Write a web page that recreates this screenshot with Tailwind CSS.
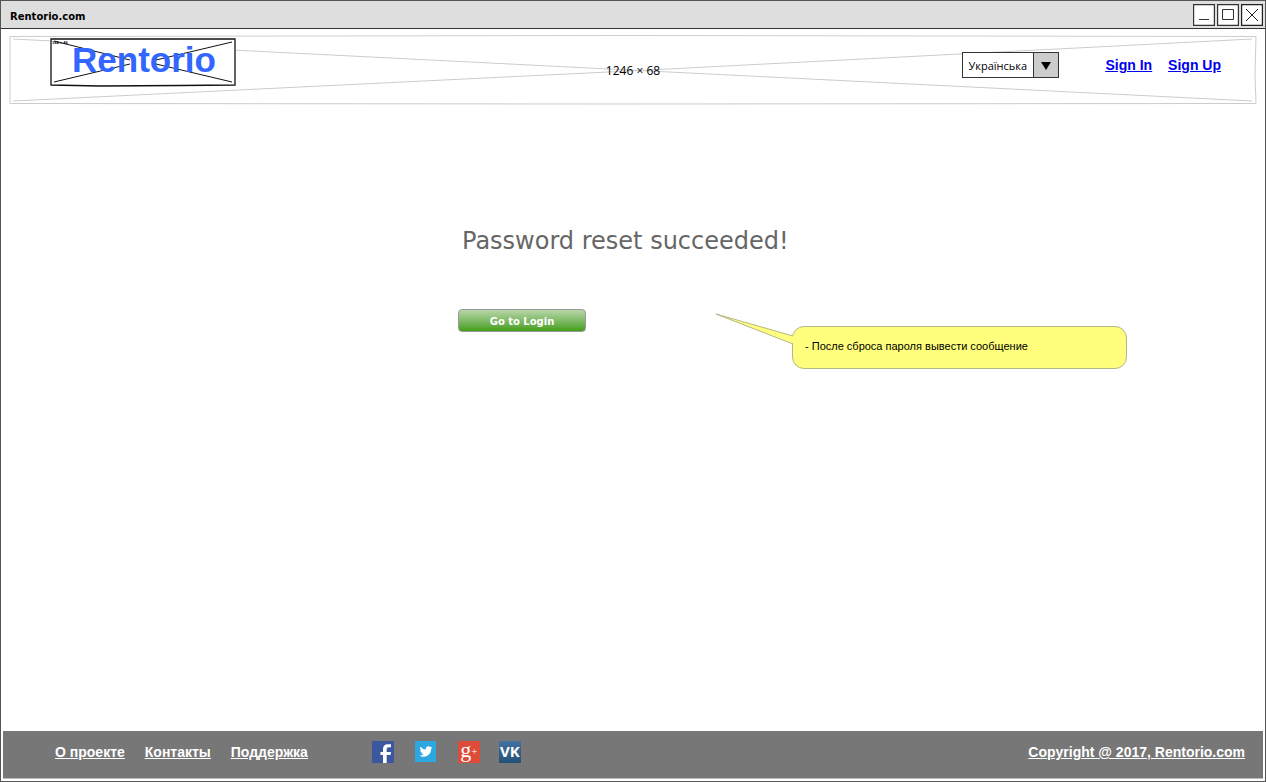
<!DOCTYPE html>
<html lang="uk">
<head>
<meta charset="utf-8">
<title>Rentorio.com</title>
<script src="https://cdn.jsdelivr.net/npm/@tailwindcss/browser@4"></script>
</head>
<body class="flex min-h-screen flex-col border border-[#555] bg-white font-['Liberation_Sans',sans-serif] text-black">
  <div class="flex h-7 items-center justify-between border-b border-[#333] bg-[#dedede] pr-[2px] pl-[9px]">
    <span class="pt-[3px] font-['DejaVu_Sans',sans-serif] text-[10px] font-bold">Rentorio.com</span>
    <div class="flex gap-[2px]">
      <button aria-label="Minimize" class="size-[22px]"><svg class="block" width="22" height="22" viewBox="0 0 22 22" fill="#fff" stroke="#333"><path stroke-width="1.200" d="M.6.6h20.800v20.800H.6z"/><path d="M6 15.500h10"/></svg></button>
      <button aria-label="Maximize" class="size-[22px]"><svg class="block" width="22" height="22" viewBox="0 0 22 22" fill="#fff" stroke="#333"><path stroke-width="1.200" d="M.6.6h20.800v20.800H.6z"/><path d="M5.500 5.500h11v10h-11z"/></svg></button>
      <button aria-label="Close" class="size-[22px]"><svg class="block" width="22" height="22" viewBox="0 0 22 22" fill="#fff" stroke="#222"><path stroke-width="1.200" d="M.6.6h20.800v20.800H.6z"/><path d="M5 5l12 12M17 5L5 17"/></svg></button>
    </div>
  </div>

  <header class="relative mx-2 mt-[6px] flex h-[70px] items-start justify-between pr-9 pl-[41px]">
    <svg class="absolute inset-0 h-full w-full" viewBox="0 0 1248 70" preserveAspectRatio="none" fill="none" stroke="#ccc"><path d="M1 1.500L620 .5L1247 1.500L1246 40L1247 68.500L600 69L1 68.500z"/><path d="M4 4L620 35L1243 66M4 66L620 36L1243 4"/></svg>
    <div class="absolute inset-0 flex items-center justify-center pt-[2px]"><span class="font-['Open_Sans',sans-serif] text-xs">1246 × 68</span></div>
    <a href="#" class="relative mt-[3px] flex h-[49px] w-[186px] items-start justify-center bg-white pt-px pl-[2px] text-[35px] leading-[42px] font-bold text-[#3366ff]">
      <svg class="absolute inset-0" width="186" height="49" viewBox="0 0 186 49" fill="none" stroke="#111"><path stroke-width="1.300" d="M1 1h184v46L130 47.500L50 48L1 47z"/><path d="M4 3L80 22M4 44L80 26M182 4L106 22M182 44L106 26"/></svg>
      <span class="absolute top-[2px] left-[2px] text-[4px] leading-[5px] text-black">184 × 46</span>
      <span class="relative">Rentorio</span>
    </a>
    <div class="relative mt-[17px] flex">
      <div class="relative mr-[46px] h-7 w-[97px]">
        <select aria-label="Language" class="h-[26px] w-full appearance-none border border-[#333] bg-white pt-[3px] pl-[5px] font-['Open_Sans',sans-serif] text-[11px]">
          <option>Українська</option>
        </select>
        <svg class="pointer-events-none absolute top-0 right-0" width="26" height="26" viewBox="0 0 26 26"><path d="M.5.5h25v25H.5z" fill="#ccc" stroke="#333"/><path d="M8 10h10l-5 8z"/></svg>
      </div>
      <nav class="flex gap-4 pt-[3px] text-sm font-bold text-[#0000ee] underline"><a href="#">Sign In</a><a href="#">Sign Up</a></nav>
    </div>
  </header>

  <main class="grow pl-[457px]">
    <h1 class="mt-[120px] pl-1 font-['DejaVu_Sans',sans-serif] text-2xl text-[#666]">Password reset succeeded!</h1>
    <div class="mt-[52px] flex items-start">
      <button class="h-[23px] w-32 shrink-0 rounded-[4px] border border-[#999] bg-linear-to-b from-[#b8d6a8] to-[#439e0a] pt-px font-['DejaVu_Sans',sans-serif] text-[10px] font-bold text-white">Go to Login</button>
      <div class="relative mt-[17px] ml-[206px] h-[43px] w-[335px] rounded-xl border border-[#b5b58a] bg-[#ffff7d] pt-[11px] pl-3 text-[11px] leading-4">
        - После сброса пароля вывести сообщение
        <svg class="absolute -top-[14px] -left-[78px]" width="80" height="36" viewBox="0 0 80 36"><path d="M79 23L1 1L79 31z" fill="#ffff7d"/><path d="M78 23L1 1L78 31" fill="none" stroke="#b5b58a"/></svg>
      </div>
    </div>
  </main>

  <footer class="mx-[2px] mb-[2px] flex h-12 items-start border-b border-[#bbb] bg-[#777] pt-[10px] pr-[18px] pl-[52px] text-sm leading-[22px] font-bold text-white">
    <nav class="flex gap-5 underline"><a href="#">О проекте</a><a href="#">Контакты</a><a href="#">Поддержка</a></nav>
    <div class="ml-16 flex gap-[21px]">
      <a href="#" aria-label="Facebook"><svg width="22" height="22" viewBox="0 0 22 22"><path fill="#3b579d" d="M0 0h22v22H0z"/><path fill="#fff" d="M11 22v-8H8.500v-3H11V8c0-3 2-4.700 4.500-4.700H19v3h-2C15.300 6.300 14.700 7 14.700 8.500V11H19l-.5 3h-3.800v8z"/></svg></a>
      <a href="#" aria-label="Twitter"><svg width="22" height="22" viewBox="0 0 22 22"><path fill="#2ca7e0" d="M0 0h21v21H0z"/><path transform="translate(4.500 4) scale(.54)" fill="#fff" d="M24 4.600a10 10 0 0 1-2.800.8 5 5 0 0 0 2.100-2.700 10 10 0 0 1-3.100 1.200 4.900 4.900 0 0 0-8.400 4.500A14 14 0 0 1 1.700 3.200a4.900 4.900 0 0 0 1.500 6.500 5 5 0 0 1-2.200-.6 4.900 4.900 0 0 0 4 4.900 5 5 0 0 1-2.300.1 4.900 4.900 0 0 0 4.600 3.400A10 10 0 0 1 0 19.500 14 14 0 0 0 21.500 7a10 10 0 0 0 2.500-2.400z"/></svg></a>
      <a href="#" aria-label="Google+" class="flex size-[22px] items-start justify-center bg-[#dd4b39] font-['Liberation_Serif',serif] font-normal"><span class="text-[22px] leading-[18px]">g</span><span class="text-[11px] leading-[20px]">+</span></a>
      <a href="#" aria-label="VK" class="-ml-[2px] flex size-[22px] items-start justify-center bg-linear-to-b from-[#45729f] to-[#245078] font-['Open_Sans',sans-serif] text-[15px] leading-[20px]">VK</a>
    </div>
    <a href="#" class="ml-auto underline">Copyright @ 2017, Rentorio.com</a>
  </footer>
</body>
</html>
